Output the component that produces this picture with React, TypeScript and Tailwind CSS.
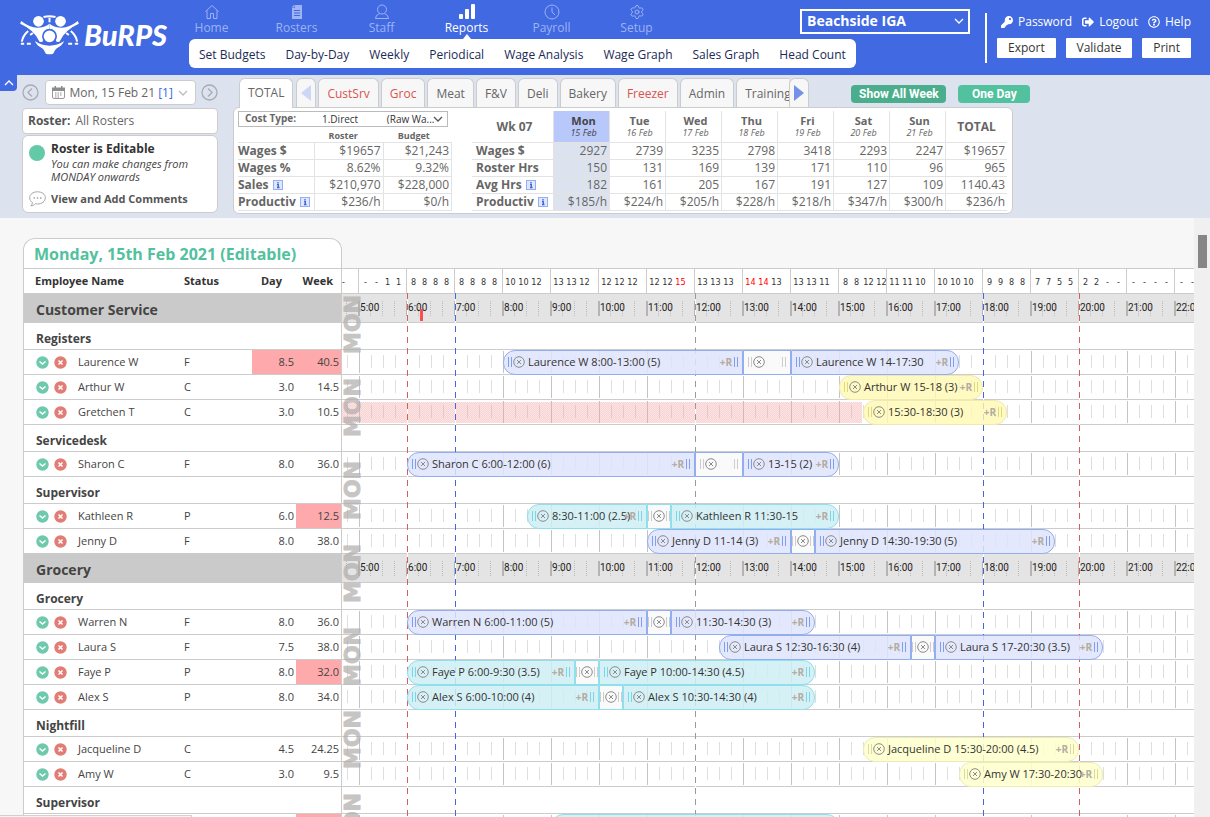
import { Fragment, useState } from 'react';
import type { ReactNode } from 'react';
import { FaKey, FaSignOutAlt, FaRegQuestionCircle } from 'react-icons/fa';
import { Settings } from 'lucide-react';

type Tone = 'blue' | 'teal' | 'yellow' | 'cream';

interface Shift {
    start: number;
    end: number;
    label?: string;
    isBreak?: boolean;
}

interface Employee {
    name: string;
    status: string;
    day: string;
    week: string;
    dayOver?: boolean;
    weekOver?: boolean;
    tone: Tone;
    leaveUntil?: number;
    shifts: Shift[];
}

// ---------------- Data ---------------- //
const HOUR_WIDTH = 48;
const FIRST_HOUR = 5;
const LEAD = 17;
const hourToX = (hour: number) => LEAD + (hour - FIRST_HOUR) * HOUR_WIDTH;

const hours = [5, 6, 7, 8, 9, 10, 11, 12, 13, 14, 15, 16, 17, 18, 19, 20, 21, 22];

const headCounts = [
    '- - 1 1', '8 8 8 8', '8 8 8 8', '10 10 12', '13 13 12', '12 12 12', '12 12 15', '13 13 13', '14 14 13',
    '13 13 11', '8 8 12 12', '11 11 10', '10 10 10', '9 9 8 8', '7 7 5 5', '2 2 - -', '- - - -', '- - - -',
];

const reportLinks = ['Set Budgets', 'Day-by-Day', 'Weekly', 'Periodical', 'Wage Analysis', 'Wage Graph', 'Sales Graph', 'Head Count'];

const departments = [
    { name: 'CustSrv', alert: true },
    { name: 'Groc', alert: true },
    { name: 'Meat', alert: false },
    { name: 'F&V', alert: false },
    { name: 'Deli', alert: false },
    { name: 'Bakery', alert: false },
    { name: 'Freezer', alert: true },
    { name: 'Admin', alert: false },
    { name: 'Training', alert: false },
];

const costRows = [
    { label: 'Wages $', info: false, values: ['$19657', '$21,243'] },
    { label: 'Wages %', info: false, values: ['8.62%', '9.32%'] },
    { label: 'Sales', info: true, values: ['$210,970', '$228,000'] },
    { label: 'Productiv', info: true, values: ['$236/h', '$0/h'] },
];

const weekDays = [
    ['Mon', '15 Feb'], ['Tue', '16 Feb'], ['Wed', '17 Feb'], ['Thu', '18 Feb'], ['Fri', '19 Feb'], ['Sat', '20 Feb'], ['Sun', '21 Feb'],
];

const weekRows = [
    { label: 'Wages $', info: false, values: ['2927', '2739', '3235', '2798', '3418', '2293', '2247', '$19657'] },
    { label: 'Roster Hrs', info: false, values: ['150', '131', '169', '139', '171', '110', '96', '965'] },
    { label: 'Avg Hrs', info: true, values: ['182', '161', '205', '167', '191', '127', '109', '1140.43'] },
    { label: 'Productiv', info: true, values: ['$185/h', '$224/h', '$205/h', '$228/h', '$218/h', '$347/h', '$300/h', '$236/h'] },
];

const roster: { name: string; groups: { name: string; staff: Employee[] }[] }[] = [
    {
        name: 'Customer Service',
        groups: [
            {
                name: 'Registers',
                staff: [
                    {
                        name: 'Laurence W', status: 'F', day: '8.5', week: '40.5', dayOver: true, weekOver: true, tone: 'blue',
                        shifts: [
                            { start: 8, end: 13, label: 'Laurence W 8:00-13:00 (5)' },
                            { start: 13, end: 14, isBreak: true },
                            { start: 14, end: 17.5, label: 'Laurence W 14-17:30' },
                        ],
                    },
                    { name: 'Arthur W', status: 'C', day: '3.0', week: '14.5', tone: 'yellow', shifts: [{ start: 15, end: 18, label: 'Arthur W 15-18 (3)' }] },
                    {
                        name: 'Gretchen T', status: 'C', day: '3.0', week: '10.5', tone: 'yellow', leaveUntil: 15.5,
                        shifts: [{ start: 15.5, end: 18.5, label: '15:30-18:30 (3)' }],
                    },
                ],
            },
            {
                name: 'Servicedesk',
                staff: [
                    {
                        name: 'Sharon C', status: 'F', day: '8.0', week: '36.0', tone: 'blue',
                        shifts: [
                            { start: 6, end: 12, label: 'Sharon C 6:00-12:00 (6)' },
                            { start: 12, end: 13, isBreak: true },
                            { start: 13, end: 15, label: '13-15 (2)' },
                        ],
                    },
                ],
            },
            {
                name: 'Supervisor',
                staff: [
                    {
                        name: 'Kathleen R', status: 'P', day: '6.0', week: '12.5', weekOver: true, tone: 'teal',
                        shifts: [
                            { start: 8.5, end: 11, label: '8:30-11:00 (2.5)' },
                            { start: 11, end: 11.5, isBreak: true },
                            { start: 11.5, end: 15, label: 'Kathleen R 11:30-15' },
                        ],
                    },
                    {
                        name: 'Jenny D', status: 'F', day: '8.0', week: '38.0', tone: 'blue',
                        shifts: [
                            { start: 11, end: 14, label: 'Jenny D 11-14 (3)' },
                            { start: 14, end: 14.5, isBreak: true },
                            { start: 14.5, end: 19.5, label: 'Jenny D 14:30-19:30 (5)' },
                        ],
                    },
                ],
            },
        ],
    },
    {
        name: 'Grocery',
        groups: [
            {
                name: 'Grocery',
                staff: [
                    {
                        name: 'Warren N', status: 'F', day: '8.0', week: '36.0', tone: 'blue',
                        shifts: [
                            { start: 6, end: 11, label: 'Warren N 6:00-11:00 (5)' },
                            { start: 11, end: 11.5, isBreak: true },
                            { start: 11.5, end: 14.5, label: '11:30-14:30 (3)' },
                        ],
                    },
                    {
                        name: 'Laura S', status: 'F', day: '7.5', week: '38.0', tone: 'blue',
                        shifts: [
                            { start: 12.5, end: 16.5, label: 'Laura S 12:30-16:30 (4)' },
                            { start: 16.5, end: 17, isBreak: true },
                            { start: 17, end: 20.5, label: 'Laura S 17-20:30 (3.5)' },
                        ],
                    },
                    {
                        name: 'Faye P', status: 'P', day: '8.0', week: '32.0', weekOver: true, tone: 'teal',
                        shifts: [
                            { start: 6, end: 9.5, label: 'Faye P 6:00-9:30 (3.5)' },
                            { start: 9.5, end: 10, isBreak: true },
                            { start: 10, end: 14.5, label: 'Faye P 10:00-14:30 (4.5)' },
                        ],
                    },
                    {
                        name: 'Alex S', status: 'P', day: '8.0', week: '34.0', tone: 'teal',
                        shifts: [
                            { start: 6, end: 10, label: 'Alex S 6:00-10:00 (4)' },
                            { start: 10, end: 10.5, isBreak: true },
                            { start: 10.5, end: 14.5, label: 'Alex S 10:30-14:30 (4)' },
                        ],
                    },
                ],
            },
            {
                name: 'Nightfill',
                staff: [
                    { name: 'Jacqueline D', status: 'C', day: '4.5', week: '24.25', tone: 'cream', shifts: [{ start: 15.5, end: 20, label: 'Jacqueline D 15:30-20:00 (4.5)' }] },
                    { name: 'Amy W', status: 'C', day: '3.0', week: '9.5', tone: 'cream', shifts: [{ start: 17.5, end: 20.5, label: 'Amy W 17:30-20:30' }] },
                ],
            },
            {
                name: 'Supervisor',
                staff: [
                    { name: '', status: '', day: '', week: '', weekOver: true, tone: 'teal', shifts: [{ start: 9, end: 15 }] },
                ],
            },
        ],
    },
];

const barTones: Record<Tone, string> = {
    blue: 'bg-[#dfe4fb]/85 border-[#92adf0]',
    teal: 'bg-[#cfeef5]/85 border-[#90dfec]',
    yellow: 'bg-[#fff7b3]/80 border-[#efeab0]',
    cream: 'bg-[#ffffcc]/85 border-[#ecebb8]',
};

const breakTones: Record<Tone, string> = {
    blue: 'border-[#92adf0]',
    teal: 'border-[#90dfec]',
    yellow: 'border-[#efeab0]',
    cream: 'border-[#ecebb8]',
};

const gripTones: Record<Tone, string> = {
    blue: 'border-[#7f9eee]',
    teal: 'border-[#7ad6e7]',
    yellow: 'border-[#e0d97c]',
    cream: 'border-[#dcdaa0]',
};

// ---------------- Icons ---------------- //
function Logo() {
    return (
        <svg width="59" height="40" viewBox="0 0 176 120" fill="#fff" aria-hidden="true">
            <g fill="none" stroke="#fff" strokeWidth="6">
                <path d="M70 6q18-4 36 0M88 8v14" />
                <path d="M24 48Q8 62 5 80M38 54l-8 6M152 48q16 14 19 32M138 54l8 6" />
                <path d="M2 86h10M20 86h12M144 86h12M164 86h10" />
            </g>
            <circle cx="55" cy="19" r="16" />
            <circle cx="121" cy="19" r="16" />
            <path d="M3 18q26 20 48 20q22 0 37-12v20q-14 14-22 36l-8-2Q42 44 0 26z" />
            <path d="M173 18q-26 20-48 20q-22 0-37-12v20q14 14 22 36l8-2q16-36 58-54z" />
            <circle cx="88" cy="64" r="20" stroke="#4169e1" strokeWidth="5" />
            <path d="M44 78q20 14 44 14t44-14q-6 14-22 22q-7 5-11 16q-11 4-22 0q-4-11-11-16q-16-8-22-22z" />
            <path d="M60 82q28 14 56 0" fill="none" stroke="#4169e1" strokeWidth="3" />
        </svg>
    );
}

function HomeIcon() {
    return (
        <svg width="16" height="16" viewBox="0 0 16 16" fill="none" stroke="currentColor" aria-hidden="true">
            <path d="M1.500 7.500L8 1.500l6.500 6M3 6.500v8h3.500v-5h3v5H13v-8" />
        </svg>
    );
}

function RostersIcon() {
    return (
        <svg width="16" height="16" viewBox="0 0 16 16" aria-hidden="true">
            <path d="M6 1h7v14H3V4h3z" fill="currentColor" />
            <path d="M2.500 3.500L5.500.5v3z" fill="currentColor" />
            <path d="M5 6.500h6M5 9h6M5 11.500h6" stroke="#4169e1" />
        </svg>
    );
}

function StaffIcon() {
    return (
        <svg width="16" height="16" viewBox="0 0 16 16" fill="none" stroke="currentColor" aria-hidden="true">
            <circle cx="8" cy="5.500" r="4.500" />
            <path d="M5.500 9.500Q1.500 11 1.500 14.500h13Q14.500 11 10.500 9.500" />
        </svg>
    );
}

function ReportsIcon() {
    return (
        <svg width="16" height="16" viewBox="0 0 16 16" fill="currentColor" aria-hidden="true">
            <rect x="0" y="10" width="4" height="5" rx="1" />
            <rect x="6" y="5" width="4" height="10" rx="1" />
            <rect x="12" y="0" width="4" height="15" rx="1" />
        </svg>
    );
}

function PayrollIcon() {
    return (
        <svg width="16" height="16" viewBox="0 0 16 16" fill="none" stroke="currentColor" aria-hidden="true">
            <circle cx="8" cy="8" r="7" />
            <path d="M8 3.500V8l3 3" />
        </svg>
    );
}

function RoundArrow({ flip }: { flip?: boolean }) {
    return (
        <svg width="17" height="17" viewBox="0 0 17 17" fill="none" stroke="#a8abb2" strokeWidth="1.300" aria-hidden="true">
            <circle cx="8.500" cy="8.500" r="7.500" />
            <path d={flip ? 'M7 4.500l4 4-4 4' : 'M10 4.500l-4 4 4 4'} />
        </svg>
    );
}

function Chevron({ up, className }: { up?: boolean; className?: string }) {
    return (
        <svg width="10" height="6" viewBox="0 0 10 6" fill="none" stroke="currentColor" strokeWidth="1.300" className={className} aria-hidden="true">
            <path d={up ? 'M1 5l4-4 4 4' : 'M1 1l4 4 4-4'} />
        </svg>
    );
}

function CalendarIcon() {
    return (
        <svg width="13" height="13" viewBox="0 0 13 13" aria-hidden="true">
            <path d="M.5 3v8q0 1.500 1.500 1.500h9q1.500 0 1.500-1.500V3" fill="none" stroke="#999" />
            <path d="M0 1.500h13V5H0zM2.500 0H4v2H2.500zM9 0h1.500v2H9z" fill="#8c8c8c" />
            <path d="M3 7h7M3 9h7M3 11h5" stroke="#8c8c8c" strokeDasharray="1.500 1" />
        </svg>
    );
}

function CommentIcon() {
    return (
        <svg width="17" height="16" viewBox="0 0 17 16" fill="none" stroke="#a5a5a5" aria-hidden="true">
            <path d="M8.500.8C4 .8.7 3.300.7 6.800c0 2 1 3.700 2.800 4.700-.2 1.500-.8 2.500-1.700 3.300 2 0 3.400-.7 4.500-2 .7.1 1.400.2 2.200.2 4.500 0 7.800-2.700 7.800-6.200S13 .8 8.500.8z" />
            <path d="M4.500 7h1.500M7.800 7h1.500M11 7h1.500" strokeWidth="1.500" />
        </svg>
    );
}

function InfoIcon() {
    return (
        <svg width="10" height="10" viewBox="0 0 10 10" className="mb-0.5 ml-1 inline-block" aria-label="info">
            <rect x=".5" y=".5" width="9" height="9" fill="#dfe6ff" stroke="#96adf2" />
            <path d="M5 2v1.200M4 4.500h1.300v3M4 7.500h2.500" stroke="#3f63d8" strokeWidth="1.300" fill="none" />
        </svg>
    );
}

function RowCheck() {
    return (
        <svg width="13" height="13" viewBox="0 0 13 13" fill="none" stroke="#fff" strokeWidth="1.500" aria-hidden="true">
            <circle cx="6.500" cy="6.500" r="6.200" fill="#6fc9ac" stroke="none" />
            <path d="M3.500 5.500l3 2.500 3-2.500" />
        </svg>
    );
}

function RowCross() {
    return (
        <svg width="13" height="13" viewBox="0 0 13 13" fill="none" stroke="#fff" strokeWidth="1.500" aria-hidden="true">
            <circle cx="6.500" cy="6.500" r="6.200" fill="#e27d75" stroke="none" />
            <path d="M4.500 4.500l4 4M8.500 4.500l-4 4" />
        </svg>
    );
}

function ShiftCross() {
    return (
        <svg width="12" height="12" viewBox="0 0 12 12" fill="none" stroke="#8b8b8b" aria-hidden="true">
            <circle cx="6" cy="6" r="5.300" />
            <path d="M4 4l4 4M8 4l-4 4" />
        </svg>
    );
}

// ---------------- Top bar ---------------- //
function NavItem({ label, active, children }: { label: string; active?: boolean; children: ReactNode }) {
    return (
        <a href="#" className={'relative flex h-[39px] w-[85px] flex-col items-center pt-1 text-xs leading-4 ' + (active ? 'text-white' : 'text-[#9db3f3]')}>
            {children}
            {label}
            {active && <span className="absolute bottom-0 border-x-4 border-b-[5px] border-x-transparent border-b-white" />}
        </a>
    );
}

function TopBar() {
    return (
        <header className="flex h-[75px] shrink-0 bg-[#4169e1]">
            <div className="flex w-[169px] shrink-0 items-center gap-[5px] pb-[6px] pl-5 text-white">
                <Logo />
                <span className="font-[Lato] text-[29px] leading-8 font-black italic">BuRPS</span>
            </div>
            <nav className="shrink-0">
                <div className="flex">
                    <NavItem label="Home"><HomeIcon /></NavItem>
                    <NavItem label="Rosters"><RostersIcon /></NavItem>
                    <NavItem label="Staff"><StaffIcon /></NavItem>
                    <NavItem label="Reports" active><ReportsIcon /></NavItem>
                    <NavItem label="Payroll"><PayrollIcon /></NavItem>
                    <NavItem label="Setup"><Settings size={16} strokeWidth={1.500} /></NavItem>
                </div>
                <div className="ml-5 flex h-[29px] items-center gap-5 rounded-md bg-white px-[10px] pt-0.5 text-xs text-[#1b2a55]">
                    {reportLinks.map((link) => (
                        <a href="#" key={link} className="whitespace-nowrap">{link}</a>
                    ))}
                </div>
            </nav>
            <div className="-ml-14 flex flex-1 justify-end pr-[19px]">
                <div className="relative mt-2 h-[25px] w-[170px] text-white">
                    <select aria-label="Store" className="h-full w-full appearance-none border-2 border-white bg-transparent pl-[5px] text-sm leading-none font-bold">
                        <option>Beachside IGA</option>
                    </select>
                    <Chevron className="absolute top-[10px] right-[6px]" />
                </div>
                <div className="mt-[13px] ml-[15px] h-[50px] w-0.5 bg-white" />
                <div className="ml-[10px] w-[194px]">
                    <div className="mt-[14px] flex h-4 items-center justify-between pl-1 text-xs text-white">
                        <a href="#" className="flex items-center gap-[5px]"><FaKey />Password</a>
                        <a href="#" className="flex items-center gap-[5px]"><FaSignOutAlt />Logout</a>
                        <a href="#" className="flex items-center gap-[5px]"><FaRegQuestionCircle />Help</a>
                    </div>
                    <div className="mt-2 flex justify-between text-xs text-[#333]">
                        <button className="h-5 rounded-[1px] bg-white px-[11px]">Export</button>
                        <button className="h-5 rounded-[1px] bg-white px-[11px]">Validate</button>
                        <button className="h-5 rounded-[1px] bg-white px-[11px]">Print</button>
                    </div>
                </div>
            </div>
        </header>
    );
}

// ---------------- Control panel ---------------- //
function RosterControls() {
    return (
        <div className="ml-[22px] w-[196px] shrink-0 text-xs text-[#666]">
            <div className="mt-[5px] flex h-[25px] items-center justify-between">
                <button aria-label="Previous day"><RoundArrow /></button>
                <button className="flex h-full w-[151px] items-center rounded-sm border border-[#ccc] bg-white pl-[6px]">
                    <CalendarIcon />
                    <span className="ml-[5px] whitespace-nowrap">Mon, 15 Feb 21 <span className="text-[#4169e1]">[1]</span></span>
                    <Chevron className="ml-[5px] text-[#bbb]" />
                </button>
                <button aria-label="Next day"><RoundArrow flip /></button>
            </div>
            <div className="mt-[3px] flex h-[26px] items-center gap-[5px] rounded-sm border border-[#ccc] bg-white px-[5px]">
                <b className="text-[#555]">Roster:</b> All Rosters
            </div>
            <div className="mt-px h-[78px] rounded-md border border-[#ccc] bg-white px-[6px] pt-1">
                <div className="flex gap-[6px]">
                    <span className="mt-[5px] size-4 shrink-0 rounded-full bg-[#63c9a6]" />
                    <div>
                        <div className="leading-[17px] font-bold text-[#333]">Roster is Editable</div>
                        <p className="text-[11px] leading-[13px] whitespace-nowrap text-[#444] italic">You can make changes from<br />MONDAY onwards</p>
                    </div>
                </div>
                <a href="#" className="mt-2 flex items-center gap-[5px] text-[11px] font-bold text-[#555]"><CommentIcon />View and Add Comments</a>
            </div>
        </div>
    );
}

function Summary() {
    return (
        <div className="flex h-[107px] w-[780px] rounded-md border border-[#ccc] bg-white pt-[3px] pl-1 text-xs text-[#666]">
            <div className="w-[214px]">
                <div className="mr-1 flex h-4 items-center border border-[#bbb] pl-[6px] text-[10px]">
                    <label htmlFor="cost" className="w-[77px] font-bold">Cost Type:</label>
                    <div className="relative flex-1 text-[#333]">
                        <select id="cost" className="h-[14px] w-full appearance-none bg-transparent leading-none">
                            <option>{'1.Direct' + '\u00a0'.repeat(11) + '(Raw Wa...'}</option>
                        </select>
                        <Chevron className="absolute top-1 right-1 text-[#555]" />
                    </div>
                </div>
                <table className="w-full table-fixed border-separate border-spacing-0">
                    <thead>
                        <tr className="h-4 text-[9px] leading-3">
                            <th className="w-[77px] border-b border-[#e3e3e3] p-0" />
                            <th className="border-b border-[#e3e3e3] p-0 pt-[3px] pr-3">Roster</th>
                            <th className="border-b border-[#e3e3e3] p-0 pt-[3px] pr-2">Budget</th>
                        </tr>
                    </thead>
                    <tbody>
                        {costRows.map((row) => (
                            <tr key={row.label} className="h-[17px] leading-4">
                                <th className="border-r border-b border-[#e3e3e3] p-0 text-left whitespace-nowrap">{row.label}{row.info && <InfoIcon />}</th>
                                {row.values.map((value) => (
                                    <td key={value} className="border-r border-b border-[#e3e3e3] p-0 pr-0.5 text-right">{value}</td>
                                ))}
                            </tr>
                        ))}
                    </tbody>
                </table>
            </div>
            <table className="ml-5 w-[535px] table-fixed border-separate border-spacing-0 self-start">
                <thead>
                    <tr className="h-8">
                        <th className="w-[82px] border-r border-b border-[#e3e3e3] p-0 pl-1">Wk 07</th>
                        {weekDays.map(([day, date], index) => (
                            <th key={day} className={'w-14 border-r border-b border-[#e3e3e3] p-0 pl-1 text-[11px] leading-3 ' + (index === 0 ? 'bg-[#b8c8fa] text-[#444]' : '')}>
                                {day}
                                <div className="text-[9px] leading-3 font-normal italic">{date}</div>
                            </th>
                        ))}
                        <th className="border-b border-[#e3e3e3] p-0">TOTAL</th>
                    </tr>
                </thead>
                <tbody>
                    {weekRows.map((row) => (
                        <tr key={row.label} className="h-[17px] leading-4">
                            <th className="border-r border-b border-[#e3e3e3] p-0 pl-1 text-left whitespace-nowrap">{row.label}{row.info && <InfoIcon />}</th>
                            {row.values.map((value, index) => (
                                <td
                                    key={index}
                                    className={
                                        'border-b border-[#e3e3e3] p-0 pr-0.5 text-right ' +
                                        (index < 7 ? 'border-r ' : '') + (index === 0 ? 'bg-[#dde3ee]' : '')
                                    }
                                >
                                    {value}
                                </td>
                            ))}
                        </tr>
                    ))}
                </tbody>
            </table>
        </div>
    );
}

function ControlPanel() {
    const tab = 'h-[29px] shrink-0 rounded-t-md border border-b-0 border-[#ccc] bg-[#f7f7f7] px-2 pt-px';
    return (
        <section className="relative flex h-[143px] shrink-0 bg-[#dde3ee]">
            <button aria-label="Collapse" className="absolute top-0 left-0 flex h-4 w-[17px] items-center justify-center rounded-br bg-[#4169e1] text-white">
                <Chevron up />
            </button>
            <RosterControls />
            <div className="ml-[15px] min-w-0 flex-1">
                <div className="flex h-8 items-end pl-[6px] text-xs text-[#666]">
                    <button className="relative -mb-px h-[30px] rounded-t-md border border-b-0 border-[#ccc] bg-white px-2 pb-0.5">TOTAL</button>
                    <button aria-label="Scroll left" className="ml-[3px] flex h-[29px] w-5 items-center justify-center rounded-t-md border border-b-0 border-[#ccc] bg-[#f7f7f7]">
                        <span className="border-y-8 border-r-[10px] border-y-transparent border-r-[#ccd6f7]" />
                    </button>
                    <div className="ml-0.5 flex w-[471px] gap-0.5 overflow-hidden">
                        {departments.map((dept) => (
                            <button key={dept.name} className={tab + (dept.alert ? ' text-[#d9534f]' : '')}>{dept.name}</button>
                        ))}
                    </div>
                    <button aria-label="Scroll right" className="flex h-[29px] w-5 items-center justify-center rounded-t-md border border-b-0 border-[#ccc] bg-[#f7f7f7]">
                        <span className="border-y-8 border-l-[10px] border-y-transparent border-l-[#7591ea]" />
                    </button>
                    <div className="ml-[42px] flex gap-3 self-center pt-[6px] font-[Roboto] leading-[18px] font-bold text-white">
                        <button className="w-[95px] rounded-sm bg-[#4aae8c]">Show All Week</button>
                        <button className="w-[72px] rounded-sm bg-[#52c19d]">One Day</button>
                    </div>
                </div>
                <Summary />
            </div>
        </section>
    );
}

// ---------------- Roster ---------------- //
function CountCells() {
    return (
        <div className="flex h-6 overflow-hidden font-['DejaVu_Sans_Condensed','Open_Sans',sans-serif] text-[9px] leading-[26px] text-[#333]">
            <span className="w-4 shrink-0">-</span>
            {headCounts.map((counts, index) => (
                <div key={index} className="flex w-12 shrink-0 border-l border-[#ccc] pl-px">
                    {counts.split(' ').map((count, i) => (
                        <span key={i} className={(count.length > 1 ? 'w-[13px] ' : 'w-[11px] ') + 'shrink-0 text-center ' + (Number(count) > 13 ? 'text-[#f00]' : '')}>
                            {count}
                        </span>
                    ))}
                </div>
            ))}
        </div>
    );
}

function Ruler() {
    return (
        <div className="flex h-7 overflow-hidden bg-[#e4e4e4] pt-[7px] font-[Roboto] text-[10px] leading-[14px] text-[#222]">
            <div className="w-4 shrink-0">
                <div className="ml-1 h-[15px] border-l border-dotted border-[#bbb]" />
            </div>
            {hours.map((hour) => (
                <div key={hour} className="grid h-[15px] w-12 shrink-0 grid-cols-[10px_12px_12px_12px] border-l-2 border-[#b4b4b4]">
                    <span className="relative">{hour}:00</span>
                    <i className="border-l border-dotted border-[#bbb]" />
                    <i className="border-l border-dotted border-[#bbb]" />
                    <i className="border-l border-dotted border-[#bbb]" />
                </div>
            ))}
        </div>
    );
}

function Grip({ className }: { className: string }) {
    return <span className={'h-[10px] w-1 shrink-0 border-x ' + className} />;
}

function ShiftBar({ shift, tone, first, last }: { shift: Shift; tone: Tone; first: boolean; last: boolean }) {
    const place = { left: hourToX(shift.start), width: (shift.end - shift.start) * HOUR_WIDTH };
    if (shift.isBreak) {
        const short = shift.end - shift.start < 1;
        return (
            <div style={place} className={'absolute top-0 z-10 flex h-[25px] items-center border bg-[#fafafa]/90 pb-px ' + (short ? 'justify-center gap-px ' : 'px-1 ') + breakTones[tone]}>
                <Grip className="border-[#ccc]" />
                <button aria-label="Remove break" className={short ? '' : 'mr-auto ml-px'}><ShiftCross /></button>
                <Grip className="border-[#ccc]" />
            </div>
        );
    }
    return (
        <div
            style={place}
            className={'absolute top-0 z-10 flex h-[25px] items-center border pb-px pl-1 ' + barTones[tone] + (first ? ' rounded-l-xl' : '') + (last ? ' rounded-r-xl' : '')}
        >
            <Grip className={gripTones[tone]} />
            <button aria-label="Remove shift" className="ml-px"><ShiftCross /></button>
            <span className="ml-[3px] text-[11px] leading-4 whitespace-nowrap text-[#333]">{shift.label}</span>
            <span className="absolute right-[10px] text-[10px] leading-4 font-bold text-[#b3aca2]">+R</span>
            <Grip className={'absolute right-1 ' + gripTones[tone]} />
        </div>
    );
}

function EmployeeRow({ employee }: { employee: Employee }) {
    const cell = 'h-[25px] border-b border-[#ccc] p-0 ';
    return (
        <tr className="text-[11px] leading-4 text-[#444]">
            <td className={cell + 'border-l'}>
                <div className="flex items-center pl-3">
                    <button aria-label="Approve"><RowCheck /></button>
                    <button aria-label="Remove" className="ml-[5px]"><RowCross /></button>
                    <span className="ml-[11px]">{employee.name}</span>
                </div>
            </td>
            <td className={cell}>{employee.status}</td>
            <td className={cell + 'pr-0.5 text-right ' + (employee.dayOver ? 'bg-[#fea9ab]' : '')}>{employee.day}</td>
            <td className={cell + 'border-r pr-0.5 text-right ' + (employee.weekOver ? 'bg-[#fea9ab]' : '')}>{employee.week}</td>
            <td className={cell}>
                <div className="relative h-6 bg-[linear-gradient(to_right,#c4c4c4_1px,transparent_1px),linear-gradient(to_right,#dedede_1px,transparent_1px)] bg-[length:48px_22px,12px_13px] bg-[position:17px_1px,5px_5px] bg-repeat-x">
                    {employee.leaveUntil && (
                        <div
                            style={{ width: hourToX(employee.leaveUntil) - 1 }}
                            className="absolute top-0.5 left-0 h-[21px] bg-[repeating-conic-gradient(rgba(245,140,140,0.4)_0_25%,rgba(240,190,190,0.36)_0_50%)] bg-[length:2px_2px]"
                        />
                    )}
                    {employee.shifts.map((shift, index) => (
                        <ShiftBar key={shift.start} shift={shift} tone={employee.tone} first={index === 0} last={index === employee.shifts.length - 1} />
                    ))}
                </div>
            </td>
        </tr>
    );
}

function TimeMarkers() {
    return (
        <div className="pointer-events-none absolute top-[55px] right-0 bottom-0 left-[319px] overflow-hidden">
            <i className="absolute top-0 bottom-0 left-[65px] w-px bg-[repeating-linear-gradient(#d0605c_0_6px,#fff_6px_11px)]" />
            <i className="absolute top-0 bottom-0 left-[113px] w-px bg-[repeating-linear-gradient(#4468d8_0_6px,#fff_6px_11px)]" />
            <i className="absolute top-0 bottom-0 left-[353px] w-px bg-[repeating-linear-gradient(#9a9a9a_0_6px,#fff_6px_11px)]" />
            <i className="absolute top-0 bottom-0 left-[641px] w-px bg-[repeating-linear-gradient(#4468d8_0_6px,#fff_6px_11px)]" />
            <i className="absolute top-0 bottom-0 left-[737px] w-px bg-[repeating-linear-gradient(#d0605c_0_6px,#fff_6px_11px)]" />
            <i className="absolute top-4 left-[78px] h-3 w-[3px] bg-[#f9504e]" />
            <div className="absolute top-0 left-[3px] w-4 font-['DejaVu_Sans',sans-serif] text-[22px] leading-4 font-bold text-[#b0acac] opacity-70 [-webkit-text-stroke:1px_#b0acac]">
                {[0, 1, 2, 3, 4, 5, 6].map((n) => (
                    <div key={n} className="mb-[21px] flex h-[62px] w-4 rotate-180 items-center justify-center [writing-mode:vertical-rl]">MON</div>
                ))}
            </div>
        </div>
    );
}

function RosterSheet() {
    const head = 'h-[25px] border-b border-[#ccc] p-0 ';
    return (
        <div className="relative ml-[23px]">
            <h1 className="h-[30px] w-[319px] rounded-t-xl border border-b-0 border-[#ccc] bg-white pl-[10px] text-base leading-[30px] font-bold text-[#52c19d]">
                Monday, 15th Feb 2021 (Editable)
            </h1>
            <table className="w-full table-fixed border-separate border-spacing-0 border-t border-[#ccc] bg-white">
                <thead>
                    <tr className="text-left text-[11px] leading-4 text-[#333]">
                        <th className={head + 'w-[161px] border-l pl-[11px]'}>Employee Name</th>
                        <th className={head + 'w-[68px]'}>Status</th>
                        <th className={head + 'w-11 pr-[14px] text-right'}>Day</th>
                        <th className={head + 'w-[46px] border-r pr-2 text-right'}>Week</th>
                        <th className={head + 'font-normal'}><CountCells /></th>
                    </tr>
                </thead>
                <tbody>
                    {roster.map((section) => (
                        <Fragment key={section.name}>
                            <tr>
                                <th colSpan={4} className="h-[29px] border-r border-b border-l border-[#ccc] bg-[#cacaca] p-0 pt-1 pl-3 text-left text-sm leading-5 text-[#444]">{section.name}</th>
                                <td className="border-b border-[#ccc] p-0"><Ruler /></td>
                            </tr>
                            {section.groups.map((group) => (
                                <Fragment key={group.name}>
                                    <tr>
                                        <th colSpan={4} className="h-[27px] border-r border-b border-l border-[#ccc] p-0 pt-[5px] pl-3 text-left text-xs leading-4 text-[#444]">{group.name}</th>
                                        <td className="border-b border-[#ccc] p-0" />
                                    </tr>
                                    {group.staff.map((employee) => (
                                        <EmployeeRow key={employee.name} employee={employee} />
                                    ))}
                                </Fragment>
                            ))}
                        </Fragment>
                    ))}
                </tbody>
            </table>
            <TimeMarkers />
        </div>
    );
}

export default function App() {
    const [statusVisible] = useState(true);

    return (
        <div className="flex h-screen flex-col overflow-hidden bg-[#f7f7f7] font-['Open_Sans',sans-serif]">
            <TopBar />
            <ControlPanel />
            <main className="flex min-h-0 flex-1">
                <div className="min-w-0 flex-1 overflow-hidden pt-5">
                    <RosterSheet />
                </div>
                <div className="w-4 shrink-0 bg-[#f0f0f0] pt-[17px]">
                    <div className="ml-1 h-[33px] w-[9px] bg-[#868686]" />
                </div>
            </main>
            {statusVisible && <div className="fixed bottom-0 left-0 z-20 h-0.5 w-48 border-t border-r border-[#d0d0d0] bg-[#f7f7f7]" />}
        </div>
    );
}
